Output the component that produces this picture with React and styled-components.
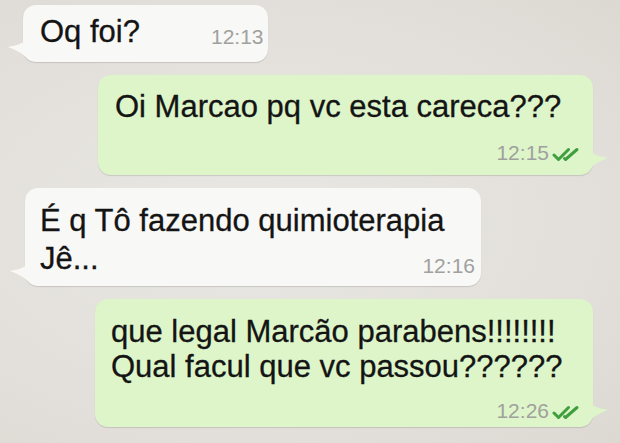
import React from 'react';
import styled, { createGlobalStyle } from 'styled-components';

const GlobalStyle = createGlobalStyle`
  body {
    margin: 0;
    background: #e4e1dc;
  }
`;

const Page = styled.div`
  width: 620px;
  height: 443px;
  box-sizing: border-box;
  padding: 5px 27px 0 23px;
  display: flex;
  flex-direction: column;
  gap: 13px;
  background: radial-gradient(ellipse at 40% 50%, #e9e7e3 0%, #e2dfda 70%, #dcd8d2 100%);
  font-family: 'Liberation Sans', Arial, sans-serif;
  overflow: hidden;
`;

const Bubble = styled.div`
  position: relative;
  box-sizing: border-box;
  width: ${({ w }) => w}px;
  align-self: ${({ out }) => (out ? 'flex-end' : 'flex-start')};
  margin-left: ${({ shift }) => shift || 0}px;
  padding: ${({ pad }) => pad};
  background: ${({ out }) => (out ? '#ddf5c8' : '#f8f8f6')};
  border-radius: 13px;
  box-shadow: 0 1px 1px rgba(0, 0, 0, 0.13);
  color: #141414;
`;

const Tail = styled.svg`
  position: absolute;
  bottom: ${({ out }) => (out ? 7 : 5)}px;
  ${({ out }) => (out ? 'right: -15px;' : 'left: -15px;')}
  width: 18px;
  height: 17px;
  fill: ${({ out }) => (out ? '#ddf5c8' : '#f8f8f6')};
  ${({ out }) => (out ? 'transform: scaleX(-1);' : '')}
`;

const Row = styled.div`
  display: flex;
  align-items: flex-end;
  justify-content: ${({ spread }) => (spread ? 'space-between' : 'flex-start')};
  gap: ${({ gap }) => gap || 0}px;
`;

const Text = styled.div`
  font-size: 31px;
  line-height: ${({ leading }) => leading || 35}px;
  white-space: nowrap;
  -webkit-text-stroke: 0.3px #141414;
`;

const Meta = styled.div`
  display: flex;
  justify-content: flex-end;
  align-items: center;
  gap: 3px;
  margin-top: ${({ top }) => top || 0}px;
`;

const Time = styled.span`
  font-size: 21px;
  line-height: 24px;
  color: #a0a19e;
`;

const Ticks = styled.svg`
  width: 30px;
  height: 15px;
  margin-top: 2px;
  fill: none;
  stroke: #3f9f3f;
  stroke-width: 3;
  stroke-linecap: round;
  stroke-linejoin: round;
`;

const BubbleTail = ({ out }) => (
  <Tail out={out} viewBox="0 0 18 17">
    <path d="M18 0 C14 4 6 6 0 7 C6 9 12 12 18 17 Z" />
  </Tail>
);

const DoubleTick = () => (
  <Ticks viewBox="0 0 30 15">
    <path d="M2 8 L6.5 12.5 L16.5 2.5" />
    <path d="M12.5 11.5 L13.5 12.5 L25 2.5" />
  </Ticks>
);

export default function App() {
  return (
    <>
      <GlobalStyle />
      <Page>
        <Bubble w={245} pad="9px 8px 13px 17px">
          <BubbleTail />
          <Row gap={71}>
            <Text>Oq foi?</Text>
            <Time>12:13</Time>
          </Row>
        </Bubble>

        <Bubble out w={495} pad="14px 11px 10px 17px">
          <BubbleTail out />
          <Text>Oi Marcao pq vc esta careca???</Text>
          <Meta top={17}>
            <Time>12:15</Time>
            <DoubleTick />
          </Meta>
        </Bubble>

        <Bubble w={456} shift={2} pad="14px 6px 8px 15px">
          <BubbleTail />
          <Text leading={38}>É q Tô fazendo quimioterapia</Text>
          <Row spread>
            <Text leading={38}>Jê...</Text>
            <Time>12:16</Time>
          </Row>
        </Bubble>

        <Bubble out w={498} pad="15px 11px 4px 16px">
          <BubbleTail out />
          <Text>que legal Marcão parabens!!!!!!!!</Text>
          <Text>Qual facul que vc passou??????</Text>
          <Meta top={15}>
            <Time>12:26</Time>
            <DoubleTick />
          </Meta>
        </Bubble>
      </Page>
    </>
  );
}
